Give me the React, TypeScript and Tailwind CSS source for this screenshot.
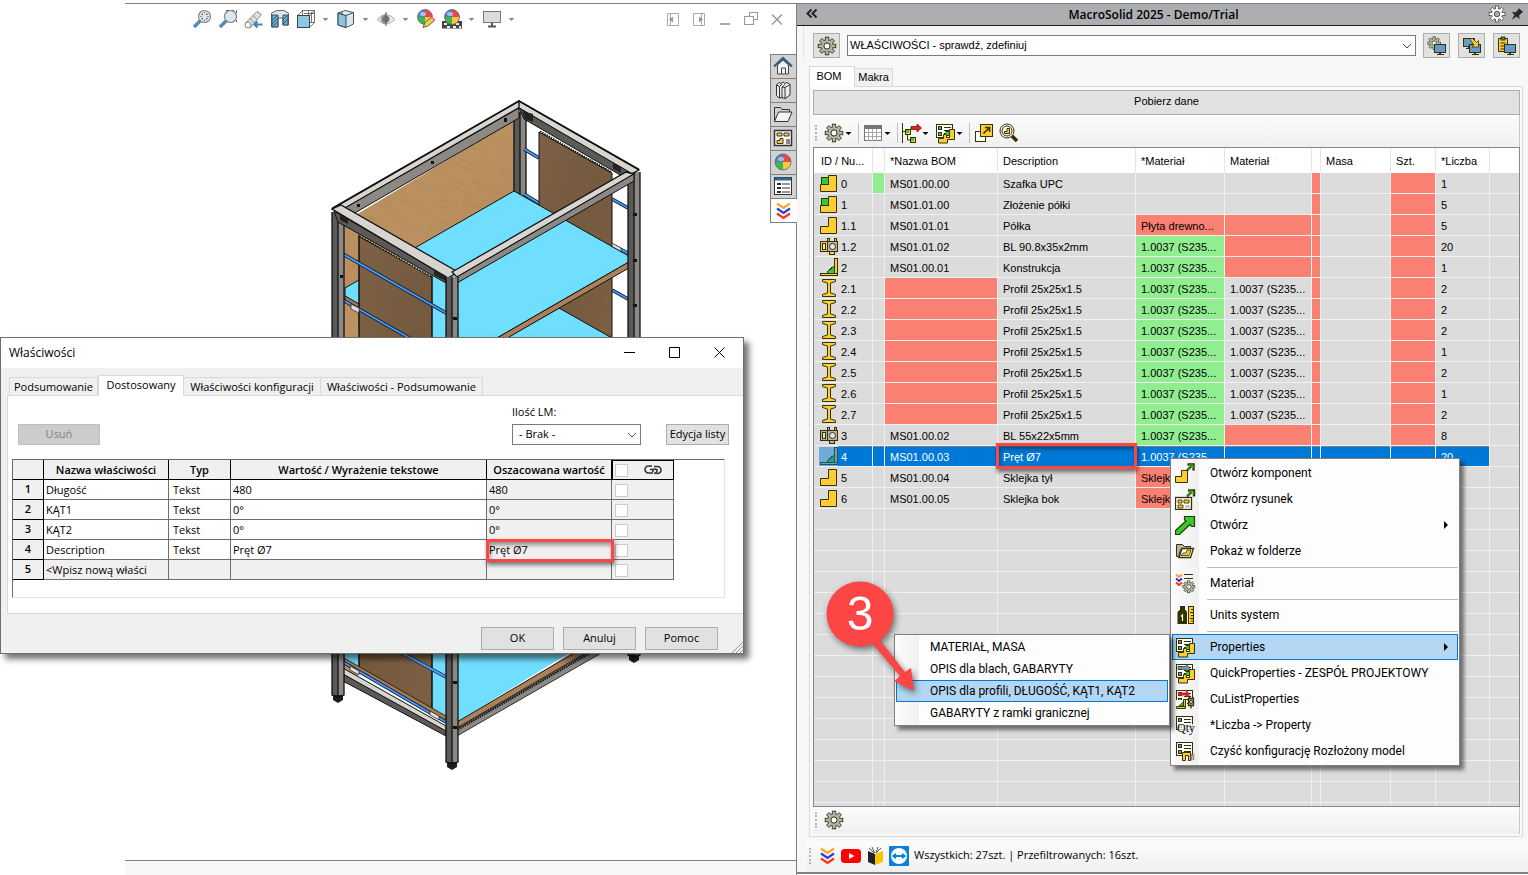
import type { ReactNode } from 'react'

type Tone = 'none' | 'red' | 'green'
type PartKind = 'assembly' | 'part' | 'sheet' | 'sheetGray' | 'weldment' | 'profile'

type BomRow = {
  kind: PartKind
  id: string
  name: string
  description: string
  material: string
  materialTone: Tone
  material2: string
  material2Tone: Tone
  count: string
  nameTone?: Tone
  markTone?: Tone
  selected?: boolean
}

type PropertyRow = {
  name: string
  type: string
  value: string
  result: string
  marked?: boolean
}

const INK = '#333300'
const GOLD = '#ffcc33'
const S235 = '1.0037 (S235...'

const profiles: BomRow[] = ['2', '2', '2', '1', '2', '1', '2'].map((count, i) => ({
  kind: 'profile',
  id: `2.${i + 1}`,
  name: '',
  nameTone: 'red',
  description: 'Profil 25x25x1.5',
  material: S235,
  materialTone: 'green',
  material2: S235,
  material2Tone: 'none',
  count,
}))

const bomRows: BomRow[] = [
  { kind: 'assembly', id: '0', name: 'MS01.00.00', description: 'Szafka UPC', material: '', materialTone: 'none', material2: '', material2Tone: 'none', count: '1', markTone: 'green' },
  { kind: 'assembly', id: '1', name: 'MS01.01.00', description: 'Złożenie półki', material: '', materialTone: 'none', material2: '', material2Tone: 'none', count: '5' },
  { kind: 'part', id: '1.1', name: 'MS01.01.01', description: 'Półka', material: 'Płyta drewno...', materialTone: 'red', material2: '', material2Tone: 'red', count: '5' },
  { kind: 'sheet', id: '1.2', name: 'MS01.01.02', description: 'BL 90.8x35x2mm', material: S235, materialTone: 'green', material2: '', material2Tone: 'red', count: '20' },
  { kind: 'weldment', id: '2', name: 'MS01.00.01', description: 'Konstrukcja', material: S235, materialTone: 'green', material2: '', material2Tone: 'red', count: '1' },
  ...profiles,
  { kind: 'sheetGray', id: '3', name: 'MS01.00.02', description: 'BL 55x22x5mm', material: S235, materialTone: 'green', material2: '', material2Tone: 'red', count: '8' },
  { kind: 'weldment', id: '4', name: 'MS01.00.03', description: 'Pręt Ø7', material: S235, materialTone: 'none', material2: '', material2Tone: 'none', count: '20', selected: true },
  { kind: 'part', id: '5', name: 'MS01.00.04', description: 'Sklejka tył', material: 'Sklejka', materialTone: 'red', material2: '', material2Tone: 'none', count: '' },
  { kind: 'part', id: '6', name: 'MS01.00.05', description: 'Sklejka bok', material: 'Sklejka', materialTone: 'red', material2: '', material2Tone: 'none', count: '' },
]

const propertyRows: PropertyRow[] = [
  { name: 'Długość', type: 'Tekst', value: '480', result: '480' },
  { name: 'KĄT1', type: 'Tekst', value: '0°', result: '0°' },
  { name: 'KĄT2', type: 'Tekst', value: '0°', result: '0°' },
  { name: 'Description', type: 'Tekst', value: 'Pręt Ø7', result: 'Pręt Ø7', marked: true },
  { name: '<Wpisz nową właści', type: '', value: '', result: '' },
]

const toneClass: Record<Tone, string> = {
  none: '',
  red: 'bg-[#fa8072]',
  green: 'bg-[#90ee90]',
}

/* ---------- icons ---------- */

function Icon({ size = 20, box = 20, children }: { size?: number; box?: number; children: ReactNode }) {
  return (
    <svg width={size} height={size} viewBox={`0 0 ${box} ${box}`} fill="none" className="block shrink-0" aria-hidden="true">
      {children}
    </svg>
  )
}

const teeth = [0, 45, 90, 135, 180, 225, 270, 315]

function GearShape({ fill = '#b3b3b3', line = INK, hole = '#fafafa' }) {
  return (
    <g>
      {teeth.map(a => (
        <rect key={a} x="8.3" y="1.2" width="3.4" height="4" fill={fill} stroke={line} strokeWidth="0.9" transform={`rotate(${a} 10 10)`} />
      ))}
      <circle cx="10" cy="10" r="6.2" fill={fill} stroke={line} strokeWidth="0.9" />
      {teeth.map(a => (
        <rect key={a} x="8.8" y="2" width="2.4" height="4" fill={fill} transform={`rotate(${a} 10 10)`} />
      ))}
      <circle cx="10" cy="10" r="3.1" fill={hole} stroke={line} />
    </g>
  )
}

function GearIcon({ size = 20 }) {
  return <Icon size={size}><GearShape /></Icon>
}

function StepShape() {
  return <path d="M1.5 10.5H9.5V1.5H17.5V17.5H1.5Z" fill={GOLD} stroke={INK} />
}

function PartIcon({ kind }: { kind: PartKind }) {
  return (
    <Icon size={19} box={19}>
      {kind === 'part' && <StepShape />}
      {kind === 'assembly' && (
        <>
          <StepShape />
          <rect x="2.5" y="3.5" width="7" height="7" fill="#33cc33" stroke={INK} />
        </>
      )}
      {(kind === 'sheet' || kind === 'sheetGray') && (
        <g stroke={INK} fill={kind === 'sheet' ? GOLD : '#b3b3b3'} shapeRendering="crispEdges">
          <path d="M8.5 4.5V1.5H10.5V4.5M15.5 4.5V1.5H17.5V4.5" />
          <path d="M10.5 14.5H15.5V17.5H10.5Z" />
          <rect x="1.5" y="4.5" width="7" height="10" />
          <rect x="8.5" y="4.5" width="10" height="10" fill="#b3b3b3" />
          <rect x="3.5" y="6.5" width="3" height="6" fill="#e6e6e6" />
          <circle cx="13.5" cy="9.5" r="3" fill="#e6e6e6" shapeRendering="auto" />
        </g>
      )}
      {kind === 'weldment' && (
        <g stroke={INK} shapeRendering="crispEdges">
          <path d="M15.5 7.5V15.5H8.5V13.5Z" fill="#33cc33" />
          <rect x="15.5" y="0.5" width="3" height="15" fill={GOLD} />
          <rect x="1.5" y="15.5" width="17" height="2" fill={GOLD} />
        </g>
      )}
      {kind === 'profile' && (
        <path d="M3.500 0.500H16.500V2.500L11.500 4V14L16.500 15.500V17.500H3.500V15.500L8.500 14V4L3.500 2.500Z" fill={GOLD} stroke={INK} />
      )}
    </Icon>
  )
}

function SheetShape() {
  return (
    <g shapeRendering="crispEdges">
      <rect x="1.5" y="1.5" width="16" height="13" fill="#fff" stroke={INK} />
      <rect x="3.5" y="3.5" width="3" height="3" fill="#6699cc" stroke={INK} />
      <rect x="3.5" y="9.5" width="3" height="3" fill="#6699cc" stroke={INK} />
      <path d="M9 4.5H16M9 7.5H16M9 10.5H16" stroke={INK} />
    </g>
  )
}

function PropsParts() {
  return (
    <g>
      <path d="M3.500 15.500H8.500V11.500H11.500V14.500H14.500V6.500H19.500V16.500H12.500V20H3.500Z" fill={GOLD} stroke={INK} />
      <path d="M10.500 8.500H14.500V12.500H11.500" fill="#33cc33" stroke={INK} />
    </g>
  )
}

function PropertiesIcon() {
  return <Icon size={21} box={21}><SheetShape /><PropsParts /></Icon>
}

function QuickPropertiesIcon() {
  return (
    <Icon size={21} box={21}>
      <SheetShape />
      <path d="M3 3.500h8V1l4 4-4 4V6.500H3Z" fill="#6699cc" stroke={INK} strokeWidth="0.600" />
      <PropsParts />
    </Icon>
  )
}

function CutListIcon() {
  return (
    <Icon size={21} box={21}>
      <SheetShape />
      <path d="M3 3.500h8V1l4 4-4 4V6.500H3Z" fill="#cc2222" />
      <rect x="1" y="11" width="11" height="10" fill="#fcfcfc" />
      <path d="M4 17L9 12v5Z" fill="#33cc33" stroke={INK} strokeWidth="0.800" />
      <path d="M8.500 10.500h2v7h-2zM1.500 17.500h9v2h-9z" fill={GOLD} stroke={INK} />
      <path d="M13.500 9.500h5v7h-5zM14.500 6.500v3M17.500 6.500v3M16 16.500v3" fill="#b3b3b3" stroke={INK} strokeWidth="1.300" />
      <circle cx="16" cy="13" r="1.500" fill="#fff" stroke={INK} />
    </Icon>
  )
}

function QtyIcon() {
  return (
    <Icon size={21} box={21}>
      <SheetShape />
      <rect x="3" y="9" width="17" height="8" fill="#fcfcfc" opacity=".7" />
      <text x="2" y="17" fontSize="12" fontFamily="Liberation Serif, serif" fill="#111">Qty</text>
    </Icon>
  )
}

function CleanIcon() {
  return (
    <Icon size={21} box={21}>
      <SheetShape />
      <path d="M7.500 19.500V11.500H15.500V19.500H13.500V14.500H10.500V19.500Z" fill={GOLD} stroke={INK} />
      <path d="M16.500 19.500V13.500H19.500M18.500 15v4" stroke="#888" strokeWidth="1.500" />
    </Icon>
  )
}

function OpenPartIcon() {
  return (
    <Icon size={21} box={21}>
      <path d="M0.500 13.500H6.500V7.500H12.500V19.500H0.500Z" fill={GOLD} stroke={INK} />
      <path d="M12 7.500l4.500-4.500M12.500 1.500h6v6" stroke={INK} strokeWidth="2.400" />
      <path d="M12.500 7l4.500-4.500M14 2h4v4" stroke="#33cc33" />
    </Icon>
  )
}

function OpenDrawingIcon() {
  return (
    <Icon size={21} box={21}>
      <rect x="0.500" y="8.500" width="16" height="12" fill="#fff" stroke={INK} strokeWidth="1.300" />
      <path d="M3 11h4v3H3zM9 11h5v3H9zM3 16h5v3H3z" fill={GOLD} stroke={INK} strokeWidth="0.900" />
      <rect x="10" y="16.500" width="5" height="2" fill="#b3b3b3" />
      <path d="M12 7.500l4.500-4.500M13 1.500h6v6" stroke={INK} strokeWidth="2.400" />
      <path d="M12.500 7l4.500-4.500M14 2h4v4" stroke="#33cc33" />
    </Icon>
  )
}

function OpenIcon() {
  return (
    <Icon size={21} box={21}>
      <path d="M0.500 15.500L11 6L9.500 5V1.500H19.500V11.500H16.500L15 9.500L4.500 19.500H0.500Z" fill="#33cc33" stroke={INK} strokeWidth="1.200" />
    </Icon>
  )
}

function FolderIcon() {
  return (
    <Icon size={21} box={21}>
      <path d="M1.500 15.500V3.500H7.500L9.500 5.500H15.500V8.500H5.500L3.500 15.500Z" fill="#b3b3b3" stroke={INK} />
      <path d="M4 16.500L7 7.500H18.500L15.500 16.500Z" fill="#fff" stroke={INK} strokeWidth="1.300" />
      <path d="M6 14.500L8 12h3l1-3h4l-2 5.500Z" fill={GOLD} stroke={INK} strokeWidth="0.800" />
    </Icon>
  )
}

function MaterialIcon() {
  return (
    <Icon size={21} box={21}>
      <path d="M1 1.500L4 4 7 1.500" stroke="#ff9933" strokeWidth="2" />
      <path d="M1 5.500L4 8 7 5.500" stroke="#3333cc" strokeWidth="2" />
      <path d="M1 9.500L4 12 7 9.500" stroke="#ff3300" strokeWidth="2" />
      <path d="M9 1.500h9M9 5.500h9" stroke={INK} />
      <g transform="translate(7 7) scale(.68)"><GearShape /></g>
    </Icon>
  )
}

function UnitsIcon() {
  return (
    <Icon size={21} box={21}>
      <path d="M5 1h5v4H5zM2.500 7l2-2h6l1.500 2v12H2.500Z" fill={INK} />
      <path d="M6 11.500L7.500 10v6" stroke="#fff" strokeWidth="1.200" />
      <rect x="13.500" y="1.500" width="5" height="17" fill={GOLD} stroke={INK} />
      <path d="M16 4.500h2M15 7.500h3M16 10.500h2M15 13.500h3M16 16h2" stroke={INK} />
    </Icon>
  )
}

function MonitorShape({ x = 8, y = 8 }) {
  return (
    <g shapeRendering="crispEdges">
      <rect x={x} y={y} width="11" height="8" fill="#6699cc" stroke={INK} />
      <path d={`M${x + 5.5} ${y + 8}v2M${x + 2} ${y + 10}h7`} stroke={INK} strokeWidth="1.500" />
    </g>
  )
}

function MagnifierShape() {
  return (
    <>
      <path d="M2 18L8.500 11.500" stroke="#4f8fb5" strokeWidth="3.500" />
      <circle cx="12.500" cy="7.500" r="6" fill="#dbe6ee" stroke="#888" strokeWidth="1.200" />
    </>
  )
}

function BallShape({ cx = 9, cy = 8, r = 7.5 }) {
  return (
    <g>
      <path d={`M${cx} ${cy}V${cy - r}A${r} ${r} 0 0 0 ${cx - r} ${cy}Z`} fill="#4a7fd6" />
      <path d={`M${cx} ${cy}V${cy - r}A${r} ${r} 0 0 1 ${cx + r} ${cy}Z`} fill="#e64a4a" />
      <path d={`M${cx} ${cy}V${cy + r}A${r} ${r} 0 0 1 ${cx - r} ${cy}Z`} fill="#3fb54a" />
      <path d={`M${cx} ${cy}V${cy + r}A${r} ${r} 0 0 0 ${cx + r} ${cy}Z`} fill="#f5c842" />
      <circle cx={cx} cy={cy} r={r} stroke="#666" strokeWidth="0.800" />
      <ellipse cx={cx - 2} cy={cy - 3} rx="3" ry="2" fill="#fff" opacity=".5" />
    </g>
  )
}

function Caret({ color = '#8a8a8a' }) {
  return (
    <svg width="8" height="20" viewBox="0 0 8 20" className="block shrink-0" aria-hidden="true">
      <path d="M0.500 9h6L3.500 12Z" fill={color} />
    </svg>
  )
}

function ChevronLogo({ size = 18 }) {
  return (
    <Icon size={size} box={18}>
      <path d="M2 1.500L8.500 6 15 1.500" stroke="#ffa629" strokeWidth="2.200" />
      <path d="M2 6.500L8.500 11 15 6.500" stroke="#2740dd" strokeWidth="2.200" />
      <path d="M2 11.500L8.500 16 15 11.500" stroke="#ff3311" strokeWidth="2.200" />
    </Icon>
  )
}

/* ---------- model view ---------- */

function Rod({ d }: { d: string }) {
  return (
    <>
      <path d={d} stroke="#0a1a33" strokeWidth="3.600" />
      <path d={d} stroke="#4a9cf5" strokeWidth="2" />
    </>
  )
}

function Post({ x, y, h, foot = true }: { x: number; y: number; h: number; foot?: boolean }) {
  return (
    <g>
      {foot && (
        <>
          <path d={`M${x + 2} ${y + h - 3}h8v6l-4 2-4-2Z`} fill="#1c1f18" />
          <path d={`M${x + 1} ${y + h + 1}h10v4l-5 3-5-3Z`} fill="#1c1f18" />
        </>
      )}
      <rect x={x} y={y} width="6" height={h} fill="#5c5a58" />
      <rect x={x + 6} y={y} width="6" height={h} fill="#8c8883" />
      <path d={`M${x} ${y}V${y + h}L${x + 6} ${y + h + 2}L${x + 12} ${y + h}V${y}M${x + 6} ${y}v${h}`} stroke="#111" strokeWidth="1.300" />
    </g>
  )
}

function CabinetModel() {
  return (
    <svg width="330" height="690" viewBox="320 90 330 690" fill="none" className="mt-14 ml-[195px] block shrink-0" aria-label="Szafka UPC">
      <defs>
        <linearGradient id="ply" x1="0" y1="0" x2="1" y2="1">
          <stop offset="0" stopColor="#b98f62" />
          <stop offset="0.5" stopColor="#ba9060" />
          <stop offset="1" stopColor="#b28457" />
        </linearGradient>
        <linearGradient id="plyDark" x1="0" y1="0" x2="1" y2="1">
          <stop offset="0" stopColor="#7d6145" />
          <stop offset="0.5" stopColor="#745a3f" />
          <stop offset="1" stopColor="#7d6044" />
        </linearGradient>
        <pattern id="grain" width="60" height="22" patternUnits="userSpaceOnUse" patternTransform="rotate(22)">
          <path d="M0 5q15-3 30 0M25 14q14-3 32 0M4 19h16" stroke="#8a5f35" strokeOpacity=".12" strokeWidth="1.500" />
        </pattern>
      </defs>

      {/* back panel */}
      <path d="M344 222L514 120V330H344Z" fill="url(#ply)" />
      <path d="M344 222L514 120V330H344Z" fill="url(#grain)" />
      <path d="M344 290h14v390h-14Z" fill="#bd9261" />
      <Post x={514} y={112} h={90} foot={false} />
      <Rod d="M524 149L539 158M524 194L542 205" />
      <Rod d="M612 199L628 208M612 245L630 254M612 290L628 299" />

      {/* right side panel */}
      <path d="M539 132L612 173V345H539Z" fill="url(#plyDark)" stroke="#111" />
      <path d="M539 132L612 173V345H539Z" fill="url(#grain)" />
      <path d="M540 131.500L611 172" stroke="#111" strokeWidth="2" strokeDasharray="1.500 1" />
      <path d="M612 243l9 5v4l-9-5Z" fill="#e0ddd8" stroke="#222" strokeWidth="0.700" />

      {/* shelves */}
      <path d="M559 308L612 338V500H440V375Z" fill="#70dfff" stroke="#111" />
      <path d="M514 191L634 259L457 361L345 296V288Z" fill="#70dfff" stroke="#111" />
      <path d="M345 296L457 361V367L345 301Z" fill="#a77a52" stroke="#111" strokeWidth="0.800" />
      <path d="M634 259L457 361V367L634 265Z" fill="#ae8058" stroke="#111" />
      <path d="M433 270H446V700H433Z" fill="#70dfff" />
      <path d="M345 640V660L446 718V640Z" fill="#70dfff" />
      <path d="M457 640H590L457 722Z" fill="#70dfff" />
      <path d="M457 722L596 640H608L457 728Z" fill="#ae8058" stroke="#111" />
      <path d="M457 729L610 640H624L457 736Z" fill="#8c8883" stroke="#111" strokeWidth="0.800" />
      <path d="M458 729.500L612 640.500" stroke="#111" strokeWidth="2" strokeDasharray="1.500 1" />

      <Post x={628} y={172} h={483} />
      <path d="M633 213h4v3h-4zM633 259h4v3h-4zM633 304h4v3h-4z" fill="#111" />

      {/* left side panel */}
      <path d="M359 236L432 277V713L359 672Z" fill="url(#plyDark)" stroke="#111" strokeWidth="1.500" />
      <path d="M359 236L432 277V713L359 672Z" fill="url(#grain)" />
      <path d="M361 236L431 276" stroke="#e8c48c" strokeWidth="1.500" strokeDasharray="1.500 1.500" />
      <Rod d="M341 253L446 313M341 299L446 359M400 652L446 677" />

      {/* bottom rail */}
      <path d="M341 667L446 726V734L341 673Z" fill="#d8d4cf" stroke="#111" />
      <path d="M341 673L446 731V736L341 680Z" fill="#5c5a58" stroke="#111" />
      <path d="M344 658L446 716V722L344 663Z" fill="#a77a52" stroke="#111" strokeWidth="0.800" />
      <Rod d="M341 661L446 722" />
      <path d="M351 304l8 4v5l-8-4ZM350 666l9 5v4l-9-5ZM430 711l9 5v4l-9-5Z" fill="#e0ddd8" stroke="#222" strokeWidth="0.700" />
      <Post x={332} y={212} h={483} />
      <path d="M340 275h3v3h-3z" fill="#111" />

      {/* top frame */}
      <path d="M332 209L519 101L520 107L345 208Z" fill="#d8d4cf" stroke="#111" strokeWidth="1.300" />
      <path d="M345 208L519 108V118L353 214Z" fill="#8c8883" stroke="#111" />
      <path d="M519 101L639 170L631 174L519 108Z" fill="#d8d4cf" stroke="#111" strokeWidth="1.300" />
      <path d="M519 108L631 173L622 176L524 119Z" fill="#5c5a58" stroke="#111" />
      <path d="M522 111l11 3v8l-8-3ZM613 163l8 4v6l-8-4Z" fill="#222" />
      <path d="M334 211L446 276V283L338 222Z" fill="#5c5a58" stroke="#111" />
      <path d="M332 209L341 205L458 272L448 278Z" fill="#d8d4cf" stroke="#111" strokeWidth="1.300" />
      <path d="M452 272L626 172L634 174L457 277Z" fill="#d8d4cf" stroke="#111" strokeWidth="1.300" />
      <path d="M457 277L634 174V181L457 283Z" fill="#8c8883" stroke="#111" />
      <path d="M332 208.500L519 101L639 169.500" stroke="#111" strokeWidth="1.600" />
      <path d="M340 214l8 5v5l-8-4ZM434 269l12 7v5l-12-6Z" fill="#222" />
      <path d="M431 161h3v3h-3zM504 118h3v4h-3zM357 204h3v3h-3z" fill="#111" />

      <Post x={446} y={277} h={485} />
      <path d="M453 317h4v3h-4zM453 681h4v3h-4zM453 726h4v3h-4z" fill="#111" />
    </svg>
  )
}

function ViewToolbar() {
  return (
    <div className="flex h-[30px] items-center justify-between pr-3 pl-[67px]">
      <div className="flex items-center gap-1.5">
        <Icon><MagnifierShape /><path d="M10 6V5h1M14 5h1v1M15 9v1h-1M11 10h-1V9M12.500 3v1M12.500 11v1M8.500 7.500h1M15.500 7.500h1" stroke="#444" /></Icon>
        <Icon><path d="M8 1.500h10.500V13" stroke="#555" strokeDasharray="3 2" /><MagnifierShape /></Icon>
        <Icon>
          <path d="M1 14.500L13 2.500l4.500 3L6 19Z" fill="#e0e0e0" stroke="#888" />
          <path d="M9 6.500l4 4M6 9.500l4 4" stroke="#888" />
          <ellipse cx="4" cy="16" rx="3" ry="3" fill="#f5f5f5" stroke="#888" />
          <path d="M18.500 15.500H11M13.500 12.500l-3 3 3 3" stroke="#3c88b4" strokeWidth="2" />
        </Icon>
        <Icon>
          <path d="M1.500 4L7 1.500H14L18.500 4V16H13V9H8V18H1.500Z" fill="#dfe6ea" stroke="#667" />
          <path d="M2 6h6v12H2zM13 6h5v10h-5z" fill="#6ab1d2" stroke="#335" strokeWidth="0.800" />
          <path d="M2 11l5-4M2 15l6-6M3 17l5-4M13 11l4-4M13 15l5-5" stroke="#255a75" />
        </Icon>
        <Icon>
          <rect x="6.500" y="1.500" width="12" height="12" stroke="#666" strokeWidth="0.900" />
          <path d="M12.500 2v5M8 4.500h10M15.500 3v11" stroke="#666" strokeWidth="0.900" />
          <path d="M1.500 7L6.500 1.500M13.500 7L18.500 1.500M13.500 18.500L18.500 13.500" stroke="#666" strokeWidth="0.900" />
          <rect x="1.500" y="6.500" width="12" height="12" fill="#8fc7e0" stroke="#345" />
        </Icon>
        <Caret />
        <Icon>
          <path d="M2 4L9 1.500 17.500 3.500V15L10 18.500 2 16Z" fill="#e4f2f8" stroke="#456" />
          <path d="M2 4L10 6.500V18.500L2 16Z" fill="#8cc4dc" stroke="#345" />
          <path d="M10 6.500L17.500 3.500M6 3v3" stroke="#345" />
          <path d="M11 7.500l6-2.500v9l-6 3Z" fill="#d3e7ef" />
        </Icon>
        <Caret />
        <Icon>
          <path d="M1 10.500Q10 1 19 10.500Q10 19 1 10.500Z" fill="#ececec" stroke="#aaa" />
          <path d="M10 5A5 5 0 0 0 10 15.500Z" fill="#999" />
          <circle cx="10" cy="10" r="3.500" fill="#7a7a7a" />
          <path d="M10 3v14" stroke="#555" />
        </Icon>
        <Caret />
        <Icon>
          <BallShape />
          <path d="M7 18.500l2-5 7-5.500 3 3-7 6Z" fill="#f7cf4a" stroke="#554" strokeWidth="0.900" />
          <path d="M14.500 9l3.500 3 1.500-1.500-3-3Z" fill="#e88" />
        </Icon>
        <Icon>
          <path d="M0 19.500V12H20V19.500Z" fill="#444" />
          <path d="M2 14h3v2H2zM14 14h3v2h-3zM5 17h3v2H5zM11 17h3v2h-3zM17 17h2v2h-2z" fill="#eee" />
          <BallShape cx={10} />
        </Icon>
        <Caret />
        <Icon>
          <rect x="1.500" y="2.500" width="17" height="11" fill="#dcdcdc" stroke="#777" />
          <path d="M10 14v3M6 17.500h8" stroke="#555" strokeWidth="2" />
        </Icon>
        <Caret />
      </div>
      <div className="flex items-center gap-3">
        <Icon size={14} box={14}><path d="M1.500 1.500h11v12h-11zM4.500 2v11" stroke="#aaa" /><path d="M3 7.500l4-3v6Z" fill="#999" /></Icon>
        <Icon size={14} box={14}><path d="M1.500 1.500h11v12h-11zM9.500 2v11" stroke="#aaa" /><path d="M11 7.500l-4-3v6Z" fill="#999" /></Icon>
        <Icon size={14} box={14}><path d="M2 12h10" stroke="#aaa" strokeWidth="2" /></Icon>
        <Icon size={14} box={14}><path d="M5.500 4.500v-4h8v7h-4M0.500 4.500h9v8h-9z" stroke="#999" strokeWidth="1.200" /></Icon>
        <Icon size={14} box={14}><path d="M2 2.500l10 10M12 2.500l-10 10" stroke="#999" strokeWidth="1.500" /></Icon>
      </div>
    </div>
  )
}

const taskTabs: { label: string; icon: ReactNode }[] = [
  {
    label: 'Zasoby',
    icon: <Icon><path d="M4.500 9v9h11V9L10 4Z" fill="#f2f2f2" stroke="#444" /><path d="M1 10.500L10 2l9 8.500" stroke="#1f5f80" strokeWidth="2.200" /><path d="M8.500 18v-6h4v6" stroke="#444" /></Icon>,
  },
  {
    label: 'Biblioteka',
    icon: <Icon><path d="M3.500 5L6 2.500l2 1 2-1.500 2 1.500 2-1 3 2V15l-5 3.500-3-1-3 0.500-2.500-2.500Z" fill="#eee" stroke="#333" /><path d="M3.500 5l3 1.500V18M6.500 6.500L9 4M9 18V7l3-2.500M12 18.500V7.500l5-3M9 7l3 0.500" stroke="#333" /></Icon>,
  },
  {
    label: 'Pliki',
    icon: <Icon><path d="M1.500 17.500V3.500H7.500L9 5.500H16.500V8" fill="#d0d0d0" stroke="#333" /><path d="M1.500 17.500L5.500 8H19L15 17.500Z" fill="#f4f4f4" stroke="#333" /></Icon>,
  },
  {
    label: 'Widoki',
    icon: <Icon><rect x="1.500" y="2.500" width="17" height="15" fill="#fff" stroke="#333" strokeWidth="1.500" /><path d="M4 5h5v3H4zM11 5h5v3h-5zM4 15.500v-3h3v-2h3v5Z" fill={GOLD} stroke="#333" /><path d="M13 11h4v5h-4z" fill="#888" /></Icon>,
  },
  { label: 'Wygląd', icon: <Icon><BallShape cx={10} cy={10} r={8} /></Icon> },
  {
    label: 'Właściwości',
    icon: <Icon><rect x="1.500" y="1.500" width="17" height="17" fill="#fff" stroke="#333" /><path d="M2 3h16" stroke="#2b6c94" strokeWidth="3" /><path d="M4 7h4v2H4zM4 11h4v2H4zM4 15h4v2H4z" fill="#234" /><path d="M9 8h8M9 12h8M9 16h8" stroke="#333" /></Icon>,
  },
]

function CadView() {
  return (
    <section className="ml-[125px] flex min-w-0 flex-1 flex-col pt-[3px]">
      <div className="flex-1 border-t border-r border-b border-[#808080]">
        <ViewToolbar />
        <div className="flex items-start justify-between">
          <CabinetModel />
          <div className="mt-5 -mr-px border-t border-l border-[#808080]">
            {taskTabs.map(tab => (
              <button key={tab.label} aria-label={tab.label}
                className="flex h-6 w-[26px] items-center justify-center border-r border-b border-[#808080] bg-[#d2d2d2] pr-px pb-0.5">
                {tab.icon}
              </button>
            ))}
            <button aria-label="MacroSolid" className="flex h-6 w-[26px] items-center justify-center border-b border-[#808080] bg-white pr-px">
              <ChevronLogo />
            </button>
          </div>
        </div>
      </div>
      <div className="h-3.5 border-r border-[#808080] bg-[#f7f7f7]" />
    </section>
  )
}

/* ---------- properties dialog ---------- */

function PropertiesDialog() {
  const button = 'border border-[#adadad] bg-[#e1e1e1]'
  const tab = 'h-[18px] border-t border-r border-[#d9d9d9] pt-px leading-4 whitespace-nowrap'
  const head = 'border-r border-b border-black p-0 pt-0.5 font-semibold whitespace-nowrap'

  return (
    <div role="dialog" aria-label="Właściwości"
      className="absolute top-[337px] left-0 z-10 w-[744px] border border-[#6e6e6e] bg-[#f0f0f0] font-['Open_Sans',sans-serif] text-[11px] text-black shadow-[5px_5px_6px_rgba(0,0,0,0.55)]">
      <div className="flex h-[30px] items-center justify-between bg-white pr-[17px] pl-2">
        <h2 className="text-[12px]">Właściwości</h2>
        <div className="flex gap-8 pb-0.5">
          <button aria-label="Minimalizuj"><Icon size={13} box={13}><path d="M1 6.500h11" stroke="#000" /></Icon></button>
          <button aria-label="Maksymalizuj"><Icon size={13} box={13}><path d="M1.500 1.500h10v10h-10z" stroke="#000" /></Icon></button>
          <button aria-label="Zamknij"><Icon size={13} box={13}><path d="M1.500 1.500l10 10M11.500 1.500l-10 10" stroke="#000" /></Icon></button>
        </div>
      </div>

      <div className="flex h-[27px] items-end pl-2">
        <button className={`${tab} w-[89px] border-l`}>Podsumowanie</button>
        <button className="relative -mb-px h-[21px] w-[86px] border border-b-0 border-[#d9d9d9] bg-white pb-0.5">Dostosowany</button>
        <button className={`${tab} w-[137px]`}>Właściwości konfiguracji</button>
        <button className={`${tab} w-[162px]`}>Właściwości - Podsumowanie</button>
      </div>

      <div className="ml-1.5 border-y border-l border-[#d9d9d9] bg-white pr-[18px] pb-[15px] pl-1">
        <div className="flex items-end justify-between pt-2 pl-1.5">
          <button className="h-[21px] w-[82px] border border-[#bfbfbf] bg-[#cccccc] text-[#838383]" disabled>Usuń</button>
          <div className="flex items-end gap-[25px]">
            <div>
              <label htmlFor="cut-list" className="mb-1 block leading-4">Ilość LM:</label>
              <div className="relative">
                <select id="cut-list" className="block h-[21px] w-[129px] appearance-none border border-[#7a7a7a] bg-white pl-1.5">
                  <option>- Brak -</option>
                </select>
                <svg width="10" height="6" viewBox="0 0 10 6" fill="none" className="pointer-events-none absolute top-2 right-1">
                  <path d="M1 1l4 4 4-4" stroke="#444" />
                </svg>
              </div>
            </div>
            <button className={`${button} -mr-1 h-[21px] w-[63px] whitespace-nowrap`}>Edycja listy</button>
          </div>
        </div>

        <div className="mt-3.5 h-[139px] border border-[#e3e3e3] border-t-[#696969] border-l-[#696969]">
          <table className="w-[661px] table-fixed border-separate border-spacing-0 text-left">
            <colgroup>
              <col className="w-[31px]" />
              <col className="w-[125px]" />
              <col className="w-[62px]" />
              <col className="w-[256px]" />
              <col className="w-[125px]" />
              <col className="w-[62px]" />
            </colgroup>
            <thead>
              <tr className="h-5 bg-[#f0f0f0] text-center">
                <th className={head} aria-label="Nr" />
                <th className={head}>Nazwa właściwości</th>
                <th className={head}>Typ</th>
                <th className={head}>Wartość / Wyrażenie tekstowe</th>
                <th className={head}>Oszacowana wartość</th>
                <th className="border border-r border-b border-black p-0">
                  <div className="flex items-center gap-4 pl-0.5">
                    <input type="checkbox" aria-label="Połącz wszystkie" className="size-[13px] appearance-none border border-[#ccc] bg-white" />
                    <Icon size={18} box={18}>
                      <path d="M8 5H4.500a3.500 3.500 0 0 0 0 7H7M10 12.500a3 3 0 0 0 3-3V8M6 8.500h2.500M10 5.500h3.500a3.500 3.500 0 0 1 0 7h-1M12.500 8.500a3.500 3.500 0 0 0-3.500 0v1.500a3 3 0 0 1-2 2.500" stroke="#333" strokeWidth="1.600" />
                    </Icon>
                  </div>
                </th>
              </tr>
            </thead>
            <tbody>
              {propertyRows.map((row, i) => {
                const cell = `border-r border-b border-[#6e6e6e] p-0 whitespace-nowrap ${i === 4 ? 'bg-[#f0f0f0]' : ''}`
                return (
                  <tr key={row.name} className="h-5 leading-4">
                    <th className="border-r border-b border-black bg-[#f0f0f0] p-0 pb-0.5 text-center font-semibold">{i + 1}</th>
                    <td className={`${cell} pl-0.5`}>{row.name}</td>
                    <td className={`${cell} pl-1`}>{row.type}</td>
                    <td className={`${cell} pl-0.5`}>{row.value}</td>
                    <td className="relative border-r border-b border-[#6e6e6e] bg-[#f0f0f0] p-0 pl-0.5">
                      {row.result}
                      {row.marked && <div className="absolute -top-px -right-[3px] -bottom-[3px] -left-px z-10 border-3 border-[#fc4545] shadow-[1px_3px_4px_rgba(0,0,0,0.5),inset_1px_3px_4px_rgba(0,0,0,0.4)]" />}
                    </td>
                    <td className="border-r border-b border-[#6e6e6e] bg-[#f0f0f0] p-0 pt-px pl-[3px]">
                      <input type="checkbox" aria-label={`Połącz ${i + 1}`} className="block size-[13px] appearance-none border border-[#ccc] bg-white" />
                    </td>
                  </tr>
                )
              })}
            </tbody>
          </table>
        </div>
      </div>

      <div className="relative flex h-[39px] items-center justify-end gap-[9px] pt-2.5 pr-[25px]">
        <button className={`${button} h-[23px] w-[73px]`}>OK</button>
        <button className={`${button} h-[23px] w-[73px]`}>Anuluj</button>
        <button className={`${button} h-[23px] w-[73px]`}>Pomoc</button>
        <svg width="11" height="11" viewBox="0 0 11 11" className="absolute right-0 bottom-0">
          <path d="M0 11L11 0M4 11L11 4M8 11L11 8" stroke="#999" />
        </svg>
      </div>
    </div>
  )
}

/* ---------- MacroSolid panel ---------- */

function Grip() {
  return <div className="mr-[7px] h-4 w-0.5 border-l-2 border-dotted border-[#b5b5b5]" />
}

function BomToolbar() {
  return (
    <div className="flex h-8 items-center border-r border-[#c8c8c8] bg-linear-to-b from-[#fcfcfc] to-[#f0f0f0] pt-1 pl-0.5">
      <Grip />
      <button aria-label="Ustawienia" className="flex gap-px"><GearIcon /><Caret color="#000" /></button>
      <div className="mr-1 ml-[5px] h-5 w-px bg-[#c0c0c0]" />
      <button aria-label="Tabela" className="flex gap-px">
        <Icon>
          <g shapeRendering="crispEdges">
            <rect x="1.500" y="2.500" width="17" height="15" fill="#fff" stroke="#777" />
            <rect x="1" y="2" width="18" height="4" fill="#777" />
            <path d="M2 9.500h16M2 13.500h16M5.500 6v12M9.500 6v12M13.500 6v12" stroke="#aaa" />
          </g>
        </Icon>
        <Caret color="#000" />
      </button>
      <div className="mr-1 ml-[5px] h-5 w-px bg-[#c0c0c0]" />
      <button aria-label="Drzewo" className="flex">
        <Icon>
          <path d="M0.500 0v20M0.500 8.500h3M5.500 12v5h3" stroke={INK} />
          <rect x="3.500" y="6.500" width="5" height="5" fill={GOLD} stroke={INK} />
          <rect x="8.500" y="14.500" width="5" height="5" fill={GOLD} stroke={INK} />
          <rect x="4" y="7" width="3" height="3" fill="#33cc33" />
          <rect x="9" y="15" width="3" height="3" fill="#33cc33" />
          <path d="M9 3.500h6V1l4.500 4-4.500 4V6.500H9Z" fill="#d22" stroke="#600" strokeWidth="0.700" />
        </Icon>
        <Caret color="#000" />
      </button>
      <button aria-label="Właściwości" className="ml-[5px] flex"><PropertiesIcon /><Caret color="#000" /></button>
      <div className="mr-1 ml-[5px] h-5 w-px bg-[#c0c0c0]" />
      <button aria-label="Otwórz">
        <Icon>
          <rect x="1.500" y="8.500" width="10" height="10" fill="#fff" stroke={INK} />
          <rect x="6.500" y="1.500" width="12" height="12" fill={GOLD} stroke={INK} />
          <path d="M9.500 10.500L15 5M11 4.500h4.500V9" stroke={INK} strokeWidth="1.600" />
        </Icon>
      </button>
      <button aria-label="Szukaj" className="ml-[5px]">
        <Icon>
          <circle cx="8" cy="8" r="7" fill="#fff" stroke={INK} />
          <circle cx="8" cy="8" r="5" fill="#fff" stroke={INK} />
          <path d="M13 13l5 5" stroke={INK} strokeWidth="3.500" />
          <path d="M5.500 10.500V8.500H8V5.500H10.500V10.500Z" fill={GOLD} stroke={INK} />
        </Icon>
      </button>
    </div>
  )
}

function BomTable() {
  const line = 'border-r border-b border-[#f0f0f0] p-0 whitespace-nowrap'
  const head = 'border-r border-[#e5e5e5] p-0 pt-0.5 pl-[5px] text-left font-normal whitespace-nowrap'
  const focus = 'bg-[#0078d7] bg-[repeating-linear-gradient(90deg,#d98a4b_0_1px,#0078d7_1px_2px)] bg-[length:100%_1px] bg-no-repeat text-white'

  return (
    <div className="min-h-0 flex-1 basis-0 overflow-hidden border border-[#828790] bg-[#dcdcdc]">
      <table className="w-full table-fixed border-separate border-spacing-0 text-[11px]">
        <colgroup>
          <col className="w-[59px]" />
          <col className="w-3" />
          <col className="w-[113px]" />
          <col className="w-[138px]" />
          <col className="w-[89px]" />
          <col className="w-[87px]" />
          <col className="w-[9px]" />
          <col className="w-[70px]" />
          <col className="w-[45px]" />
          <col className="w-[54px]" />
          <col />
        </colgroup>
        <thead>
          <tr className="h-[25px] bg-white">
            <th className={head}><span className="pl-0.5">ID / Nu...</span></th>
            <th className={head} aria-label="Stan" />
            <th className={head}>*Nazwa BOM</th>
            <th className={head}>Description</th>
            <th className={head}>*Materiał</th>
            <th className={head}>Materiał</th>
            <th className="border-r border-[#e5e5e5] p-0" aria-label="Stan materiału" />
            <th className={head}>Masa</th>
            <th className={head}>Szt.</th>
            <th className={head}>*Liczba</th>
            <th className="p-0" aria-label="Inne" />
          </tr>
        </thead>
        <tbody>
          {bomRows.map((row, i) => {
            const stateTone: Tone = i < 13 ? 'red' : 'none'
            const pick = row.selected ? focus : ''
            const text = `${line} pt-0.5 pl-[5px] ${pick}`
            return (
              <tr key={row.id} className="h-[21px] leading-4">
                <td className={line}>
                  <div className="flex h-5 items-center">
                    <div className={row.selected ? 'relative ml-[5px] after:absolute after:inset-0 after:bg-[#0078d7]/50' : 'ml-[5px]'}>
                      <PartIcon kind={row.kind} />
                    </div>
                    <span className={`h-5 flex-1 pt-px pl-[3px] leading-5 ${pick}`}>{row.id}</span>
                  </div>
                </td>
                <td className={`${line} ${toneClass[row.markTone ?? 'none']} ${pick}`} />
                <td className={`${text} ${toneClass[row.nameTone ?? 'none']}`}>{row.name}</td>
                <td className={`${text} relative`}>
                  {row.description}
                  {row.selected && <div className="absolute -inset-x-0.5 -inset-y-[3px] z-10 border-3 border-[#fc4545] shadow-[1px_3px_4px_rgba(0,0,0,0.5),inset_1px_3px_4px_rgba(0,0,0,0.4)]" />}
                </td>
                <td className={`${text} ${toneClass[row.materialTone]}`}>{row.material}</td>
                <td className={`${text} ${toneClass[row.material2Tone]}`}>{row.material2}</td>
                <td className={`${line} ${toneClass[stateTone]} ${pick}`} />
                <td className={text} />
                <td className={`${text} ${toneClass[stateTone]}`} />
                <td className={text}>{row.count}</td>
                <td className="border-b border-[#f0f0f0] p-0" />
              </tr>
            )
          })}
          {Array.from({ length: 15 }, (_, i) => (
            <tr key={i} className="h-[21px]">
              {Array.from({ length: 11 }, (_, j) => (
                <td key={j} className={j < 10 ? line : 'border-b border-[#f0f0f0] p-0'} />
              ))}
            </tr>
          ))}
        </tbody>
      </table>
    </div>
  )
}

function MenuItem({ icon, children, active, arrow, submenu }: { icon: ReactNode; children: ReactNode; active?: boolean; arrow?: boolean; submenu?: ReactNode }) {
  return (
    <li className="relative">
      <button className={`flex h-[26px] w-full items-center border px-0.5 text-left whitespace-nowrap ${active ? 'border-[#0078d7] bg-[#b3d7f3]' : 'border-transparent'}`}>
        {icon}
        <span className="ml-3.5 flex-1">{children}</span>
        {arrow && <svg width="6" height="8" viewBox="0 0 6 8" className="mr-1.5"><path d="M1 0l4 4-4 4Z" fill="#000" /></svg>}
      </button>
      {submenu}
    </li>
  )
}

function MenuLine() {
  return <li className="ml-[35px] flex h-1.5 items-center" role="separator"><div className="h-px w-full bg-[#bdbdbd]" /></li>
}

const submenuItems = [
  'MATERIAŁ, MASA',
  'OPIS dla blach, GABARYTY',
  'OPIS dla profili, DŁUGOŚĆ, KĄT1, KĄT2',
  'GABARYTY z ramki granicznej',
]

function ContextMenu() {
  const menuBox = 'border border-[#808080] bg-[#fdfdfd] bg-linear-to-r from-[#fcfcfc] to-[#f0f0f0] bg-no-repeat shadow-[4px_4px_4px_rgba(0,0,0,0.5)]'

  return (
    <ul className={`absolute top-[458px] left-[373px] z-10 w-[290px] p-px bg-[length:28px_100%] font-['Roboto',sans-serif] text-[12px] ${menuBox}`}>
      <MenuItem icon={<OpenPartIcon />}>Otwórz komponent</MenuItem>
      <MenuItem icon={<OpenDrawingIcon />}>Otwórz rysunek</MenuItem>
      <MenuItem icon={<OpenIcon />} arrow>Otwórz</MenuItem>
      <MenuItem icon={<FolderIcon />}>Pokaż w folderze</MenuItem>
      <MenuLine />
      <MenuItem icon={<MaterialIcon />}>Materiał</MenuItem>
      <MenuLine />
      <MenuItem icon={<UnitsIcon />}>Units system</MenuItem>
      <MenuLine />
      <MenuItem icon={<PropertiesIcon />} active arrow
        submenu={
          <ul className={`absolute top-0 right-full mr-0.5 w-[276px] p-px bg-[length:24px_100%] ${menuBox}`}>
            {submenuItems.map((label, i) => (
              <li key={label}>
                <button className={`block h-[22px] w-full border pl-[33px] text-left leading-5 whitespace-nowrap ${i === 2 ? 'border-[#0078d7] bg-[#b3d7f3]' : 'border-transparent'}`}>
                  {label}
                </button>
              </li>
            ))}
          </ul>
        }>
        Properties
      </MenuItem>
      <MenuItem icon={<QuickPropertiesIcon />}>QuickProperties - ZESPÓŁ PROJEKTOWY</MenuItem>
      <MenuItem icon={<CutListIcon />}>CuListProperties</MenuItem>
      <MenuItem icon={<QtyIcon />}>*Liczba -&gt; Property</MenuItem>
      <MenuItem icon={<CleanIcon />}>Czyść konfigurację Rozłożony model</MenuItem>
    </ul>
  )
}

function StepCallout() {
  return (
    <div className="pointer-events-none absolute top-[580px] left-[29px] z-20 h-[116px] w-[92px] drop-shadow-[2px_3px_3px_rgba(0,0,0,0.5)]">
      <svg width="92" height="116" viewBox="0 0 92 116" className="absolute inset-0">
        <path d="M46 63L53 59L79 92L85 88L88 111L68 101L74 96Z" fill="#fc4545" />
        <ellipse cx="34" cy="34" rx="33.500" ry="32.500" fill="#fc4545" />
      </svg>
      <span className="relative block w-[68px] text-center font-['Liberation_Sans',sans-serif] text-[48px] leading-[68px] text-white">3</span>
    </div>
  )
}

function MacroPanel() {
  const toolButton = 'flex h-[25px] w-[27px] shrink-0 items-center justify-center border border-[#adadad] bg-[#e1e1e1]'

  return (
    <aside className="relative flex h-screen w-[731px] shrink-0 flex-col bg-[#f7f7f7] font-['Open_Sans',sans-serif] text-black">
      <div className="h-[3px] bg-white" />
      <header className="flex h-[23px] items-center justify-between border-t border-b border-t-[#808080] border-b-[#1a1a1a] bg-[#adaeb2] pr-1 pl-2">
        <button aria-label="Zwiń">
          <Icon size={14} box={14}><path d="M6.500 1.500L2.500 5.500l4 4M11.500 1.500L7.500 5.500l4 4" stroke="#222" strokeWidth="2" /></Icon>
        </button>
        <h1 className="text-[12px] font-semibold">MacroSolid 2025 - Demo/Trial</h1>
        <div className="flex items-center gap-1 pb-0.5">
          <Icon size={18}><GearShape fill="#fff" line="#444" hole="#adaeb2" /></Icon>
          <Icon size={14} box={14}><path d="M8.500 0.500l5 4.500-1.500 1-2.500 2.500 0.500 4.500-3.500-3L1 13.500 4 8 1 4.500l4.500 0.500 2.500-2.500Z" fill="#2a2a2a" stroke="#eee" strokeWidth="0.400" /></Icon>
        </div>
      </header>

      <div className="ml-1.5 flex items-center border-l border-[#e3e3e3] pt-[7px] pr-[8px] pl-[9px] font-['Liberation_Sans',sans-serif] text-[11px]">
        <button aria-label="Ustawienia" className={toolButton}><GearIcon /></button>
        <div className="relative ml-[7px] flex-1">
          <select aria-label="Makro" className="block h-[21px] w-full appearance-none border border-[#7a7a7a] bg-white pl-0.5">
            <option>WŁAŚCIWOŚCI - sprawdź, zdefiniuj</option>
          </select>
          <svg width="10" height="6" viewBox="0 0 10 6" fill="none" className="pointer-events-none absolute top-2 right-1">
            <path d="M1 1l4 4 4-4" stroke="#444" />
          </svg>
        </div>
        <div className="ml-[7px] flex gap-2">
          <button aria-label="Konfiguruj" className={toolButton}>
            <Icon><g transform="scale(.72)"><GearShape /></g><MonitorShape x={7.5} y={8.5} /></Icon>
          </button>
          <button aria-label="Kopiuj" className={toolButton}>
            <Icon><MonitorShape x={1.5} y={2.5} /><MonitorShape x={7.5} y={8.5} /><path d="M7.500 2.500h3l4 4 2-2v6.500h-6.500l2-2Z" fill={GOLD} stroke={INK} strokeWidth="0.800" /></Icon>
          </button>
          <button aria-label="Wklej" className={toolButton}>
            <Icon>
              <path d="M1.500 2.500h9v13h-9z" fill={GOLD} stroke={INK} />
              <path d="M4 1h4v3H4z" fill="#777" stroke={INK} />
              <path d="M3.500 7h5M3.500 10h4M3.500 13h4" stroke={INK} />
              <MonitorShape x={7.5} y={8.5} />
            </Icon>
          </button>
        </div>
      </div>

      <div className="mt-2 ml-3 flex h-5 items-end font-['Liberation_Sans',sans-serif] text-[11px]">
        <button className="relative z-10 -mb-px h-[21px] w-[46px] border border-b-0 border-[#d9d9d9] bg-white pr-1.5 pb-0.5">BOM</button>
        <button className="h-[18px] w-[38px] border border-b-0 border-l-0 border-[#d9d9d9] bg-[#f0f0f0]">Makra</button>
      </div>

      <div className="mr-[5px] ml-3 flex min-h-0 flex-1 flex-col border border-[#d9d9d9] bg-[#fafafa] pt-[3px] pr-0.5 pl-[3px] font-['Liberation_Sans',sans-serif]">
        <button className="h-[25px] shrink-0 border border-[#adadad] bg-[#e1e1e1] pb-0.5 text-[11px]">Pobierz dane</button>
        <BomToolbar />
        <BomTable />
        <div className="flex h-[27px] shrink-0 items-center border-r border-[#c8c8c8] bg-linear-to-b from-[#fcfcfc] to-[#f0f0f0] pb-0.5 pl-0.5">
          <Grip />
          <GearIcon />
        </div>
        <div className="h-0.5 shrink-0" />
      </div>

      <footer className="mt-1 ml-2.5 flex h-[31px] shrink-0 items-center bg-linear-to-b from-[#fcfcfc] to-[#f0f0f0] pb-0.5 pl-0.5 text-[11px]">
        <Grip />
        <div className="ml-px flex items-center gap-1">
          <ChevronLogo />
          <a href="#youtube" aria-label="YouTube">
            <Icon><rect x="0" y="3" width="20" height="14" rx="3.500" fill="#f00" /><path d="M8 7l5.500 3-5.500 3Z" fill="#fff" /></Icon>
          </a>
          <Icon>
            <path d="M3 5l7 3v11l-7-3Z" fill="#222" />
            <path d="M18 5l-8 3v11l8-3Z" fill="#f7c600" />
            <path d="M4 2l5 5M7 1l2.500 6M16 2l-5 5M13 1l-2 6" stroke="#555" />
          </Icon>
          <a href="#teamviewer" aria-label="TeamViewer">
            <Icon>
              <rect width="20" height="20" rx="1" fill="#0b80d8" />
              <circle cx="10" cy="10" r="8" fill="#fff" />
              <path d="M2.500 10L7 7v2h6V7l4.500 3-4.500 3v-2H7v2Z" fill="#0b80d8" />
            </Icon>
          </a>
        </div>
        <span className="ml-[5px]">Wszystkich: 27szt. | Przefiltrowanych: 16szt.</span>
      </footer>
      <div className="h-[3px] shrink-0 border-t-2 border-[#808080] bg-white" />

      <ContextMenu />
      <StepCallout />
    </aside>
  )
}

export default function App() {
  return (
    <main className="relative flex h-screen overflow-hidden bg-white">
      <CadView />
      <MacroPanel />
      <PropertiesDialog />
    </main>
  )
}
